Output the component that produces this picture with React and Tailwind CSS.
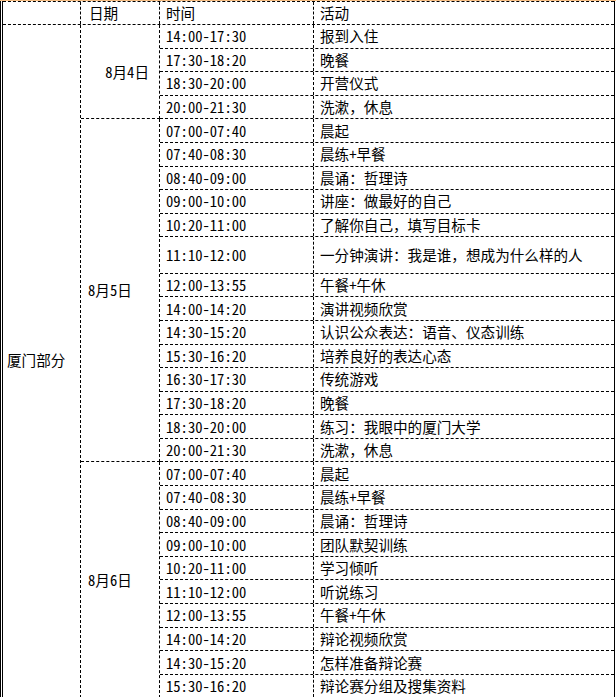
import React from 'react';

const days = [
    {
        date: '8月4日',
        align: 'right',
        rows: [
            ['14:00-17:30', '报到入住'],
            ['17:30-18:20', '晚餐'],
            ['18:30-20:00', '开营仪式'],
            ['20:00-21:30', '洗漱，休息'],
        ],
    },
    {
        date: '8月5日',
        rows: [
            ['07:00-07:40', '晨起'],
            ['07:40-08:30', '晨练+早餐'],
            ['08:40-09:00', '晨诵：哲理诗'],
            ['09:00-10:00', '讲座：做最好的自己'],
            ['10:20-11:00', '了解你自己，填写目标卡'],
            ['11:10-12:00', '一分钟演讲：我是谁，想成为什么样的人', true],
            ['12:00-13:55', '午餐+午休'],
            ['14:00-14:20', '演讲视频欣赏'],
            ['14:30-15:20', '认识公众表达：语音、仪态训练'],
            ['15:30-16:20', '培养良好的表达心态'],
            ['16:30-17:30', '传统游戏'],
            ['17:30-18:20', '晚餐'],
            ['18:30-20:00', '练习：我眼中的厦门大学'],
            ['20:00-21:30', '洗漱，休息'],
        ],
    },
    {
        date: '8月6日',
        rows: [
            ['07:00-07:40', '晨起'],
            ['07:40-08:30', '晨练+早餐'],
            ['08:40-09:00', '晨诵：哲理诗'],
            ['09:00-10:00', '团队默契训练'],
            ['10:20-11:00', '学习倾听'],
            ['11:10-12:00', '听说练习'],
            ['12:00-13:55', '午餐+午休'],
            ['14:00-14:20', '辩论视频欣赏'],
            ['14:30-15:20', '怎样准备辩论赛'],
            ['15:30-16:20', '辩论赛分组及搜集资料'],
        ],
    },
];

const App = () => {
    return (
        <div
            className="w-[616px] bg-white text-black text-[14.6px] leading-[20px]"
            style={{ fontFamily: "'Noto Sans Mono CJK SC', 'Noto Sans CJK SC', monospace" }}
        >
            <div className="h-px bg-[#f8bf84]" />
            <div className="w-[615px] border-l-[3px] border-double border-r border-r-black border-l-black">
                {/* header */}
                <div className="flex h-[24px] border-y border-dashed border-black">
                    <div className="w-[78px] border-r border-dashed border-black" />
                    <div className="w-[79px] border-r border-dashed border-black pl-[8px] flex items-center">日期</div>
                    <div className="w-[154px] border-r border-dashed border-black pl-[6px] flex items-center">时间</div>
                    <div className="flex-1 pl-[6px] flex items-center">活动</div>
                </div>

                <div className="flex">
                    <div className="w-[78px] border-r border-dashed border-black pl-[4px] pt-[325px]">厦门部分</div>
                    <div className="flex-1">
                        {days.map(day => (
                            <div key={day.date} className="flex">
                                <div
                                    className={
                                        day.align === 'right'
                                            ? 'w-[79px] border-r border-b border-dashed border-black flex items-center justify-end pr-[10px]'
                                            : 'w-[79px] border-r border-b border-dashed border-black flex items-center pl-[7px]'
                                    }
                                >
                                    {day.date}
                                </div>
                                <div className="flex-1">
                                    {day.rows.map(([time, act, tall]) => (
                                        <div
                                            key={time}
                                            className={
                                                tall
                                                    ? 'flex h-[36.4px] border-b border-dashed border-black'
                                                    : 'flex h-[23.6px] border-b border-dashed border-black'
                                            }
                                        >
                                            <div className="w-[154px] border-r border-dashed border-black pl-[6px] flex items-center">{time}</div>
                                            <div className="flex-1 pl-[6px] flex items-center whitespace-nowrap">{act}</div>
                                        </div>
                                    ))}
                                </div>
                            </div>
                        ))}
                    </div>
                </div>
            </div>
        </div>
    );
};

export default App;
